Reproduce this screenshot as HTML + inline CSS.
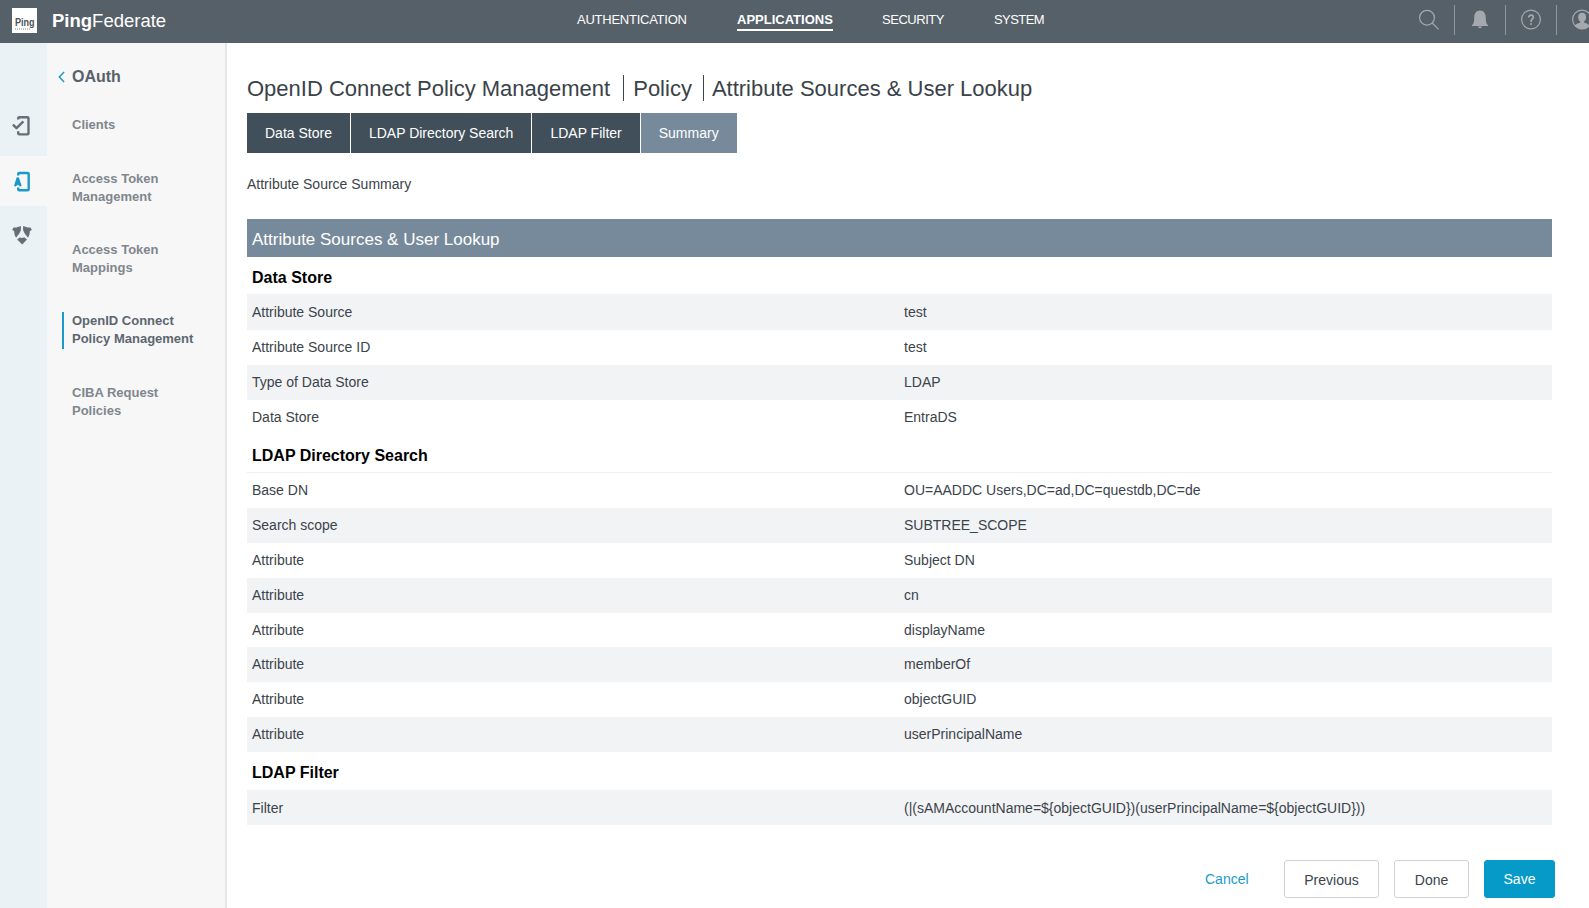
<!DOCTYPE html>
<html><head><meta charset="utf-8">
<style>
*{box-sizing:border-box;margin:0;padding:0}
html,body{width:1589px;height:908px;overflow:hidden;background:#fff;font-family:"Liberation Sans",sans-serif;color:#3b434b}
.abs{position:absolute}
#hdr{position:absolute;left:0;top:0;width:1589px;height:43px;background:#566068}
#logo{position:absolute;left:12px;top:8px;width:25px;height:25px;background:#fff}
#brand{position:absolute;left:52px;top:10px;font-size:18.5px;color:#fff;white-space:nowrap;line-height:21px}
#brand b{font-weight:bold}
.nav{position:absolute;top:12px;font-size:13px;color:#fff;letter-spacing:-0.25px;white-space:nowrap;line-height:16px}
.nav.act{font-weight:bold;letter-spacing:0}
.nav.act:after{content:"";position:absolute;left:0;right:0;top:17px;height:2.2px;background:#fff}
.sep{position:absolute;top:5px;width:1px;height:30px;background:#8d969c}
#rail{position:absolute;left:0;top:43px;width:47px;height:865px;background:#ebf2f6}
#railact{position:absolute;left:0;top:156px;width:47px;height:50px;background:#f7f7f7}
#side{position:absolute;left:47px;top:43px;width:180px;height:865px;background:#f7f7f7;border-right:2px solid #e5e7ea}
.item{position:absolute;left:72px;font-size:13px;font-weight:bold;color:#7f868d;line-height:18px;white-space:nowrap}
.item.act{color:#5d666e}
#title{position:absolute;left:247px;top:75px;font-size:22px;line-height:27px;white-space:nowrap;color:#3a4249}
#title .ts{display:inline-block;width:1px;height:26px;background:#3a4249;vertical-align:top;margin:1px 11px 0 11px}
#tabs{position:absolute;left:247px;top:113px;height:40px;display:flex}
.tab{height:40px;background:#414f5a;color:#fff;font-size:14px;line-height:40px;padding:0 18px;margin-right:1px;white-space:nowrap}
.tab.act{background:#778a9b}
#sub{position:absolute;left:247px;top:175px;font-size:14px;line-height:18px;color:#3b434b;white-space:nowrap}
#tbl{position:absolute;left:247px;top:219px;width:1305px}
.bar{height:38px;background:#778a9b;color:#fff;font-size:17px;line-height:38px;padding:1.5px 0 0 5px;white-space:nowrap}
.sh{height:37px;font-size:16px;font-weight:bold;color:#000;padding:0.5px 0 0 5px;line-height:40px;white-space:nowrap}
.row{height:35px;font-size:14px;line-height:34px;position:relative;white-space:nowrap;color:#3b434b}
.row.g{background:#f2f3f5}
.row .l{display:inline-block;width:652px;margin-left:5px}
.row .v{display:inline-block}
.btn{position:absolute;top:860px;height:38px;border:1px solid #cfd2d4;border-radius:3px;background:#fff;font-size:14px;line-height:36px;text-align:center;color:#3b434b;white-space:nowrap}
</style></head><body>
<div id="hdr">

  <div id="logo"><div class="abs" style="left:3px;top:7.5px;font-size:11px;font-weight:bold;line-height:13px;color:#4d5358;transform:scaleX(0.82);transform-origin:0 0">Ping</div><div class="abs" style="left:2.5px;top:20px;width:15px;height:2px;background:repeating-linear-gradient(90deg,#c2c5c8 0 1px,#fff 1px 2px)"></div></div>
  <svg class="abs" style="left:1400px;top:0" width="189" height="43" viewBox="1400 0 189 43">
    <g fill="none" stroke="#a3a9ae" stroke-width="1.2">
      <circle cx="1427" cy="17.7" r="7.4"/>
      <line x1="1432.3" y1="23" x2="1438.6" y2="29.3"/>
      <circle cx="1531" cy="19.5" r="9.4"/>
      <circle cx="1582" cy="19.5" r="9.4"/>
      <path d="M1528.7 17.5 C1528.7 16 1529.7 15.2 1531 15.2 C1532.4 15.2 1533.3 16 1533.3 17.3 C1533.3 18.9 1531.1 19.2 1531.1 21.1 V21.9" stroke-width="1.7"/>
    </g>
    <g fill="#a3a9ae">
      <path d="M1480 10.4 C1476.4 10.6 1474.5 13 1474.3 16.5 L1474 21.5 Q1473.6 24.1 1472 25.1 L1472 26.1 L1488 26.1 L1488 25.1 Q1486.4 24.1 1486 21.5 L1485.7 16.5 C1485.5 13 1483.6 10.6 1480 10.4 Z"/>
      <path d="M1477.8 26.6 L1482.2 26.6 Q1481.6 28.3 1480 28.3 Q1478.4 28.3 1477.8 26.6 Z"/>
      <path d="M1582.1 12.8 c-2.4 0 -4 1.6 -4 4.1 c0 1.9 0.8 3.6 2 4.6 v1.2 c-2.4 0.5 -4.4 1.5 -5.6 2.9 a9.6 9.6 0 0 0 15.2 0 c-1.2 -1.4 -3.2 -2.4 -5.6 -2.9 v-1.2 c1.2 -1 2 -2.7 2 -4.6 c0 -2.5 -1.6 -4.1 -4 -4.1 z"/>
      <circle cx="1531" cy="23.9" r="1"/>
    </g>
  </svg>
  <div id="brand"><b>Ping</b>Federate</div>
  <div class="nav" style="left:577px">AUTHENTICATION</div>
  <div class="nav act" style="left:737px">APPLICATIONS</div>
  <div class="nav" style="left:882px;letter-spacing:-0.47px">SECURITY</div>
  <div class="nav" style="left:994px;letter-spacing:-0.55px">SYSTEM</div>
  <div class="sep" style="left:1454px"></div>
  <div class="sep" style="left:1505px"></div>
  <div class="sep" style="left:1556px"></div>
</div>
<div id="rail"></div>
<div id="side"></div>
<div id="railact"></div>
<svg class="abs" style="left:0;top:100px" width="47" height="160" viewBox="0 100 47 160">
  <g fill="none" stroke="#676f76" stroke-width="2.4" stroke-linejoin="round" stroke-linecap="butt">
    <path d="M18.2 119.6 V118.3 Q18.2 117.2 19.3 117.2 H27.4 Q28.5 117.2 28.5 118.3 V133.3 Q28.5 134.4 27.4 134.4 H19.3 Q18.2 134.4 18.2 133.3 V131.2"/>
    <path d="M12.9 124.6 L16.5 128.2 L23.4 121.3" stroke-linecap="butt"/>
  </g>
  <g fill="none" stroke="#1a9ac9" stroke-width="2.4" stroke-linejoin="round">
    <path d="M18.2 175.4 V174.1 Q18.2 173 19.3 173 H27.6 Q28.7 173 28.7 174.1 V189.2 Q28.7 190.3 27.6 190.3 H19.3 Q18.2 190.3 18.2 189.2 V187.4"/>
  </g>
  <path fill="#1a9ac9" d="M14.1 185.6 L16.6 177.6 Q17.7 177 18.9 177.6 L21.6 185.6 Q21 186.8 20 186.4 L17.85 184.7 L15.7 186.4 Q14.7 186.8 14.1 185.6 Z"/>
  <g fill="#676f76">
    <path d="M12.1 230.1 L13.6 227.5 L16.4 227.6 L20.9 225.9 L20.9 230.3 L19.3 233.6 L16 237.8 L14.6 234.7 L14.1 231 Z"/>
    <path d="M31.9 230.1 L30.4 227.5 L27.6 227.6 L23.1 225.9 L23.1 230.3 L24.7 233.6 L28 237.8 L29.4 234.7 L29.9 231 Z"/>
    <path d="M17.1 239.4 L19.8 237.5 L22 238 L24.2 237.2 L27 239.4 L22.2 244.6 Z"/>
  </g>
</svg>
<svg class="abs" style="left:50px;top:65px" width="20" height="24" viewBox="50 65 20 24"><path d="M64.1 72.1 L59.3 77 L64.1 81.9" fill="none" stroke="#1a9ac9" stroke-width="1.45"/></svg>
<div class="abs" style="left:72px;top:67px;font-size:16px;font-weight:bold;color:#57616a;line-height:20px">OAuth</div>
<div class="item" style="top:115.5px">Clients</div>
<div class="item" style="top:170px">Access Token<br>Management</div>
<div class="item" style="top:240.5px">Access Token<br>Mappings</div>
<div class="abs" style="left:62px;top:312px;width:2px;height:37px;background:#1a9ac9"></div>
<div class="item act" style="top:312px">OpenID Connect<br>Policy Management</div>
<div class="item" style="top:383.5px">CIBA Request<br>Policies</div>

<div id="title">OpenID Connect Policy Management<span class="ts" style="margin:0 9px 0 13px"></span>Policy<span class="ts" style="margin:0 8px 0 11px"></span>Attribute Sources &amp; User Lookup</div>
<div id="tabs">
  <div class="tab">Data Store</div>
  <div class="tab">LDAP Directory Search</div>
  <div class="tab">LDAP Filter</div>
  <div class="tab act">Summary</div>
</div>
<div id="sub">Attribute Source Summary</div>
<div id="tbl">
  <div class="bar">Attribute Sources &amp; User Lookup</div>
  <div class="sh">Data Store</div>
  <div class="row g" style="height:36px;padding-top:1px"><span class="l">Attribute Source</span><span class="v">test</span></div>
  <div class="row"><span class="l">Attribute Source ID</span><span class="v">test</span></div>
  <div class="row g"><span class="l">Type of Data Store</span><span class="v">LDAP</span></div>
  <div class="row"><span class="l">Data Store</span><span class="v">EntraDS</span></div>
  <div class="sh" style="height:38px;border-bottom:1px solid #eef0f2;padding-top:1px">LDAP Directory Search</div>
  <div class="row"><span class="l">Base DN</span><span class="v">OU=AADDC Users,DC=ad,DC=questdb,DC=de</span></div>
  <div class="row g"><span class="l">Search scope</span><span class="v">SUBTREE_SCOPE</span></div>
  <div class="row"><span class="l">Attribute</span><span class="v">Subject DN</span></div>
  <div class="row g"><span class="l">Attribute</span><span class="v">cn</span></div>
  <div class="row" style="height:34px"><span class="l">Attribute</span><span class="v">displayName</span></div>
  <div class="row g"><span class="l">Attribute</span><span class="v">memberOf</span></div>
  <div class="row"><span class="l">Attribute</span><span class="v">objectGUID</span></div>
  <div class="row g"><span class="l">Attribute</span><span class="v">userPrincipalName</span></div>
  <div class="sh" style="height:38px;padding-top:1px">LDAP Filter</div>
  <div class="row g" style="padding-top:1px"><span class="l">Filter</span><span class="v">(|(sAMAccountName=${objectGUID})(userPrincipalName=${objectGUID}))</span></div>
</div>
<div class="abs" style="left:1205px;top:870px;font-size:14px;line-height:18px;color:#1a9bc9">Cancel</div>
<div class="btn" style="left:1284px;width:95px;padding-top:1px">Previous</div>
<div class="btn" style="left:1394px;width:75px;padding-top:1px">Done</div>
<div class="btn" style="left:1484px;width:71px;background:#069ac9;border-color:#069ac9;color:#fff">Save</div>
</body></html>
